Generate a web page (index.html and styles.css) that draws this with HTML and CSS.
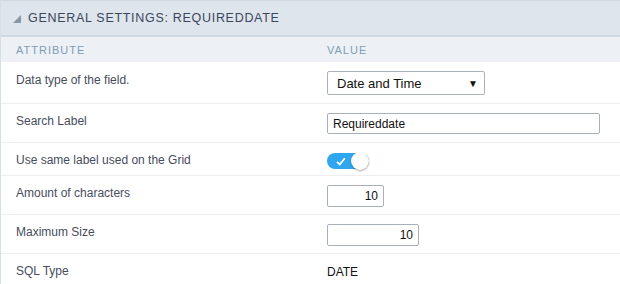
FILE: index.html
```html
<!DOCTYPE html>
<html>
<head>
<meta charset="utf-8">
<link rel="stylesheet" href="styles.css">
</head>
<body>
<div class="panel">
  <div class="panel-title"><span class="caret"></span>GENERAL SETTINGS: REQUIREDDATE</div>
  <table class="props">
    <thead>
      <tr><th class="c-attr">ATTRIBUTE</th><th class="c-val">VALUE</th></tr>
    </thead>
    <tbody>
      <tr class="r-select">
        <td class="c-attr">Data type of the field.</td>
        <td class="c-val"><div class="select"><span>Date and Time</span><span class="arrow">&#9660;</span></div></td>
      </tr>
      <tr>
        <td class="c-attr">Search Label</td>
        <td class="c-val"><div class="input wide">Requireddate</div></td>
      </tr>
      <tr class="r-toggle">
        <td class="c-attr">Use same label used on the Grid</td>
        <td class="c-val"><div class="toggle"><svg class="check" width="10" height="9" viewBox="0 0 10 9"><path d="M1 4.8 L3.8 7.4 L8.8 1.2" fill="none" stroke="#fff" stroke-width="1.8"/></svg><span class="knob"></span></div></td>
      </tr>
      <tr>
        <td class="c-attr">Amount of characters</td>
        <td class="c-val"><div class="input num small">10</div></td>
      </tr>
      <tr>
        <td class="c-attr">Maximum Size</td>
        <td class="c-val"><div class="input num medium">10</div></td>
      </tr>
      <tr class="last">
        <td class="c-attr">SQL Type</td>
        <td class="c-val plain">DATE</td>
      </tr>
    </tbody>
  </table>
</div>
</body>
</html>
```
FILE: styles.css
```css
html, body {
  margin: 0;
  padding: 0;
  background: #ffffff;
}
body {
  font-family: "Liberation Sans", Arial, sans-serif;
  width: 620px;
  height: 284px;
  overflow: hidden;
}
.panel {
  border-left: 1px solid #d6dfe6;
  box-sizing: border-box;
  width: 620px;
}
.panel-title {
  height: 34px;
  border-top: 1px solid #cfd9e1;
  border-bottom: 2px solid #cdd8e0;
  background: #dfe5ed;
  display: flex;
  align-items: center;
  padding-left: 12px;
  font-size: 12.5px;
  letter-spacing: 0.7px;
  color: #3a475a;
  box-sizing: content-box;
}
.caret {
  width: 0;
  height: 0;
  border-style: solid;
  border-width: 0 0 8px 8px;
  border-color: transparent transparent #8a96a3 transparent;
  margin-right: 7px;
  margin-top: 1px;
}
.props {
  width: 100%;
  border-collapse: collapse;
  font-size: 12px;
}
.props th {
  background: #edf1f5;
  color: #7d9db5;
  font-weight: normal;
  font-size: 11px;
  letter-spacing: 1px;
  text-align: left;
  height: 25px;
  padding: 0 0 0 15px;
  vertical-align: middle;
}
.props td {
  vertical-align: top;
  padding: 10px 0 0 15px;
  border-bottom: 1px solid #ebeff3;
  height: 28px;
  box-sizing: content-box;
  color: #474c5c;
}
.props td.c-attr {
  width: 296px;
}
.props tr.r-select td { height: 30px; padding-top: 11px; }
.props tr.r-select td.c-val { padding-top: 9px; }
.props tr.r-toggle td { height: 22px; }
.props tr.last td { border-bottom: none; }
.props td.c-val { color: #111; }
.props td.plain { padding-top: 11px; }
.select {
  width: 158px;
  height: 24px;
  box-sizing: border-box;
  border: 1px solid #aab1bc;
  border-radius: 2px;
  display: flex;
  align-items: center;
  justify-content: space-between;
  padding: 0 6px 0 9px;
  font-size: 13px;
  color: #111;
}
.select .arrow {
  font-size: 10px;
  color: #111;
}
.input {
  height: 22px;
  box-sizing: border-box;
  border: 1px solid #a9b0bc;
  border-radius: 2px;
  font-size: 12px;
  color: #111;
  display: flex;
  align-items: center;
  padding: 0 5px;
}
.input.wide { width: 273px; height: 21px; margin-top: -1px; }
.input.num { justify-content: flex-end; }
.input.small { width: 57px; margin-top: -1px; }
.input.medium { width: 92px; margin-top: -1px; }
.toggle {
  width: 42px;
  height: 16px;
  border-radius: 8px;
  background: #2ea7f0;
  position: relative;
  display: flex;
  align-items: center;
  padding-left: 9px;
  box-sizing: border-box;
}
.knob {
  position: absolute;
  right: 0;
  top: -1px;
  width: 18px;
  height: 18px;
  border-radius: 50%;
  background: #fff;
  box-shadow: 0 1px 2px rgba(0,0,0,0.35);
}
```
